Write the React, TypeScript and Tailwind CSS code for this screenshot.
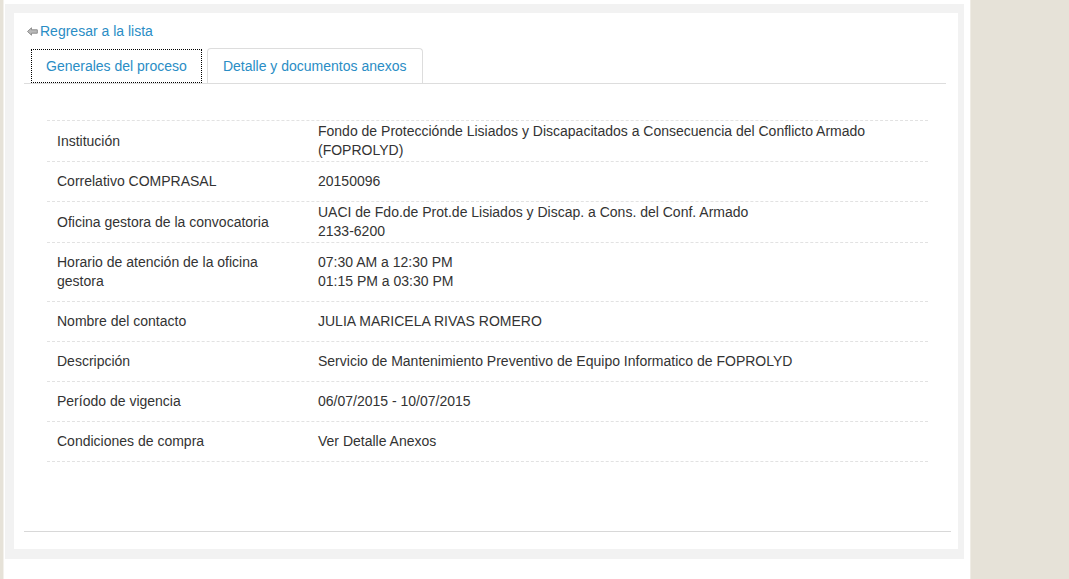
import React from "react";

type Row = { label: string; value: string[] };

const ROWS: Row[] = [
  {
    label: "Institución",
    value: [
      "Fondo de Protecciónde Lisiados y Discapacitados a Consecuencia del Conflicto Armado (FOPROLYD)",
    ],
  },
  { label: "Correlativo COMPRASAL", value: ["20150096"] },
  {
    label: "Oficina gestora de la convocatoria",
    value: ["UACI de Fdo.de Prot.de Lisiados y Discap. a Cons. del Conf. Armado", "2133-6200"],
  },
  {
    label: "Horario de atención de la oficina gestora",
    value: ["07:30 AM a 12:30 PM", "01:15 PM a 03:30 PM"],
  },
  { label: "Nombre del contacto", value: ["JULIA MARICELA RIVAS ROMERO"] },
  {
    label: "Descripción",
    value: ["Servicio de Mantenimiento Preventivo de Equipo Informatico de FOPROLYD"],
  },
  { label: "Período de vigencia", value: ["06/07/2015 - 10/07/2015"] },
  { label: "Condiciones de compra", value: ["Ver Detalle Anexos"] },
];

function BackArrow() {
  return (
    <svg width="11" height="9" viewBox="0 0 11 9" className="mr-[2px] mt-[1px]">
      <path
        d="M0.5 4.5 L4.5 0.8 L4.5 2.8 L10.3 2.8 L10.3 6.2 L4.5 6.2 L4.5 8.2 Z"
        fill="#b9b9b9"
        stroke="#8f8f8f"
        strokeWidth="1"
        strokeLinejoin="round"
      />
    </svg>
  );
}

export default function App() {
  return (
    <div
      className="flex w-[1069px] h-[579px] bg-white text-[14px] text-[#333] overflow-hidden"
      style={{ fontFamily: '"Liberation Sans", Arial, sans-serif' }}
    >
      {/* left strip */}
      <div className="w-[4px] bg-[#e6e2d8] border-r border-[#f3f1ec]" />

      {/* main */}
      <div className="w-[966px] pt-[4px] pl-[1px]">
        <div className="w-[959px] bg-[#f2f2f2] pt-[9px] pl-[9px] pr-[6px] pb-[10px]">
          <div className="bg-white h-[536px] px-[10px] pt-[9px] flex flex-col">
            {/* back link */}
            <a className="flex items-center text-[#2a8dc5] leading-[18px] pl-[3px] cursor-pointer">
              <BackArrow />
              Regresar a la lista
            </a>

            {/* tabs */}
            <div className="mt-[8px] flex items-end border-b border-[#dddddd] mr-[2px]">
              <div className="ml-[7px] h-[34px] px-[14px] flex items-center border border-dotted border-black text-[#2a8dc5] bg-white">
                Generales del proceso
              </div>
              <div className="ml-[5px] h-[35px] px-[15px] flex items-center border border-b-0 border-[#dddddd] rounded-t-[4px] text-[#2a8dc5]">
                Detalle y documentos anexos
              </div>
            </div>

            {/* detail table */}
            <div className="mt-[36px] ml-[23px] w-[881px] border-t border-dashed border-[#e2e2e2]">
              {ROWS.map((r) => (
                <div
                  key={r.label}
                  className="grid grid-cols-[261px_1fr] items-center border-b border-dashed border-[#e2e2e2] min-h-[40px]"
                >
                  <div className="px-[10px] py-[10px] leading-[19px]">{r.label}</div>
                  <div className="px-[10px] py-[1px] leading-[19px]">
                    {r.value.map((v, i) => (
                      <div key={i}>{v}</div>
                    ))}
                  </div>
                </div>
              ))}
            </div>

            <div className="flex-1" />
            <div className="border-t border-[#d8d8d8] mb-[17px] mr-[-3px]" />
          </div>
        </div>
      </div>

      {/* right sidebar */}
      <div className="flex-1 bg-[#e6e2d8] border-l border-[#efece5]" />
    </div>
  );
}
